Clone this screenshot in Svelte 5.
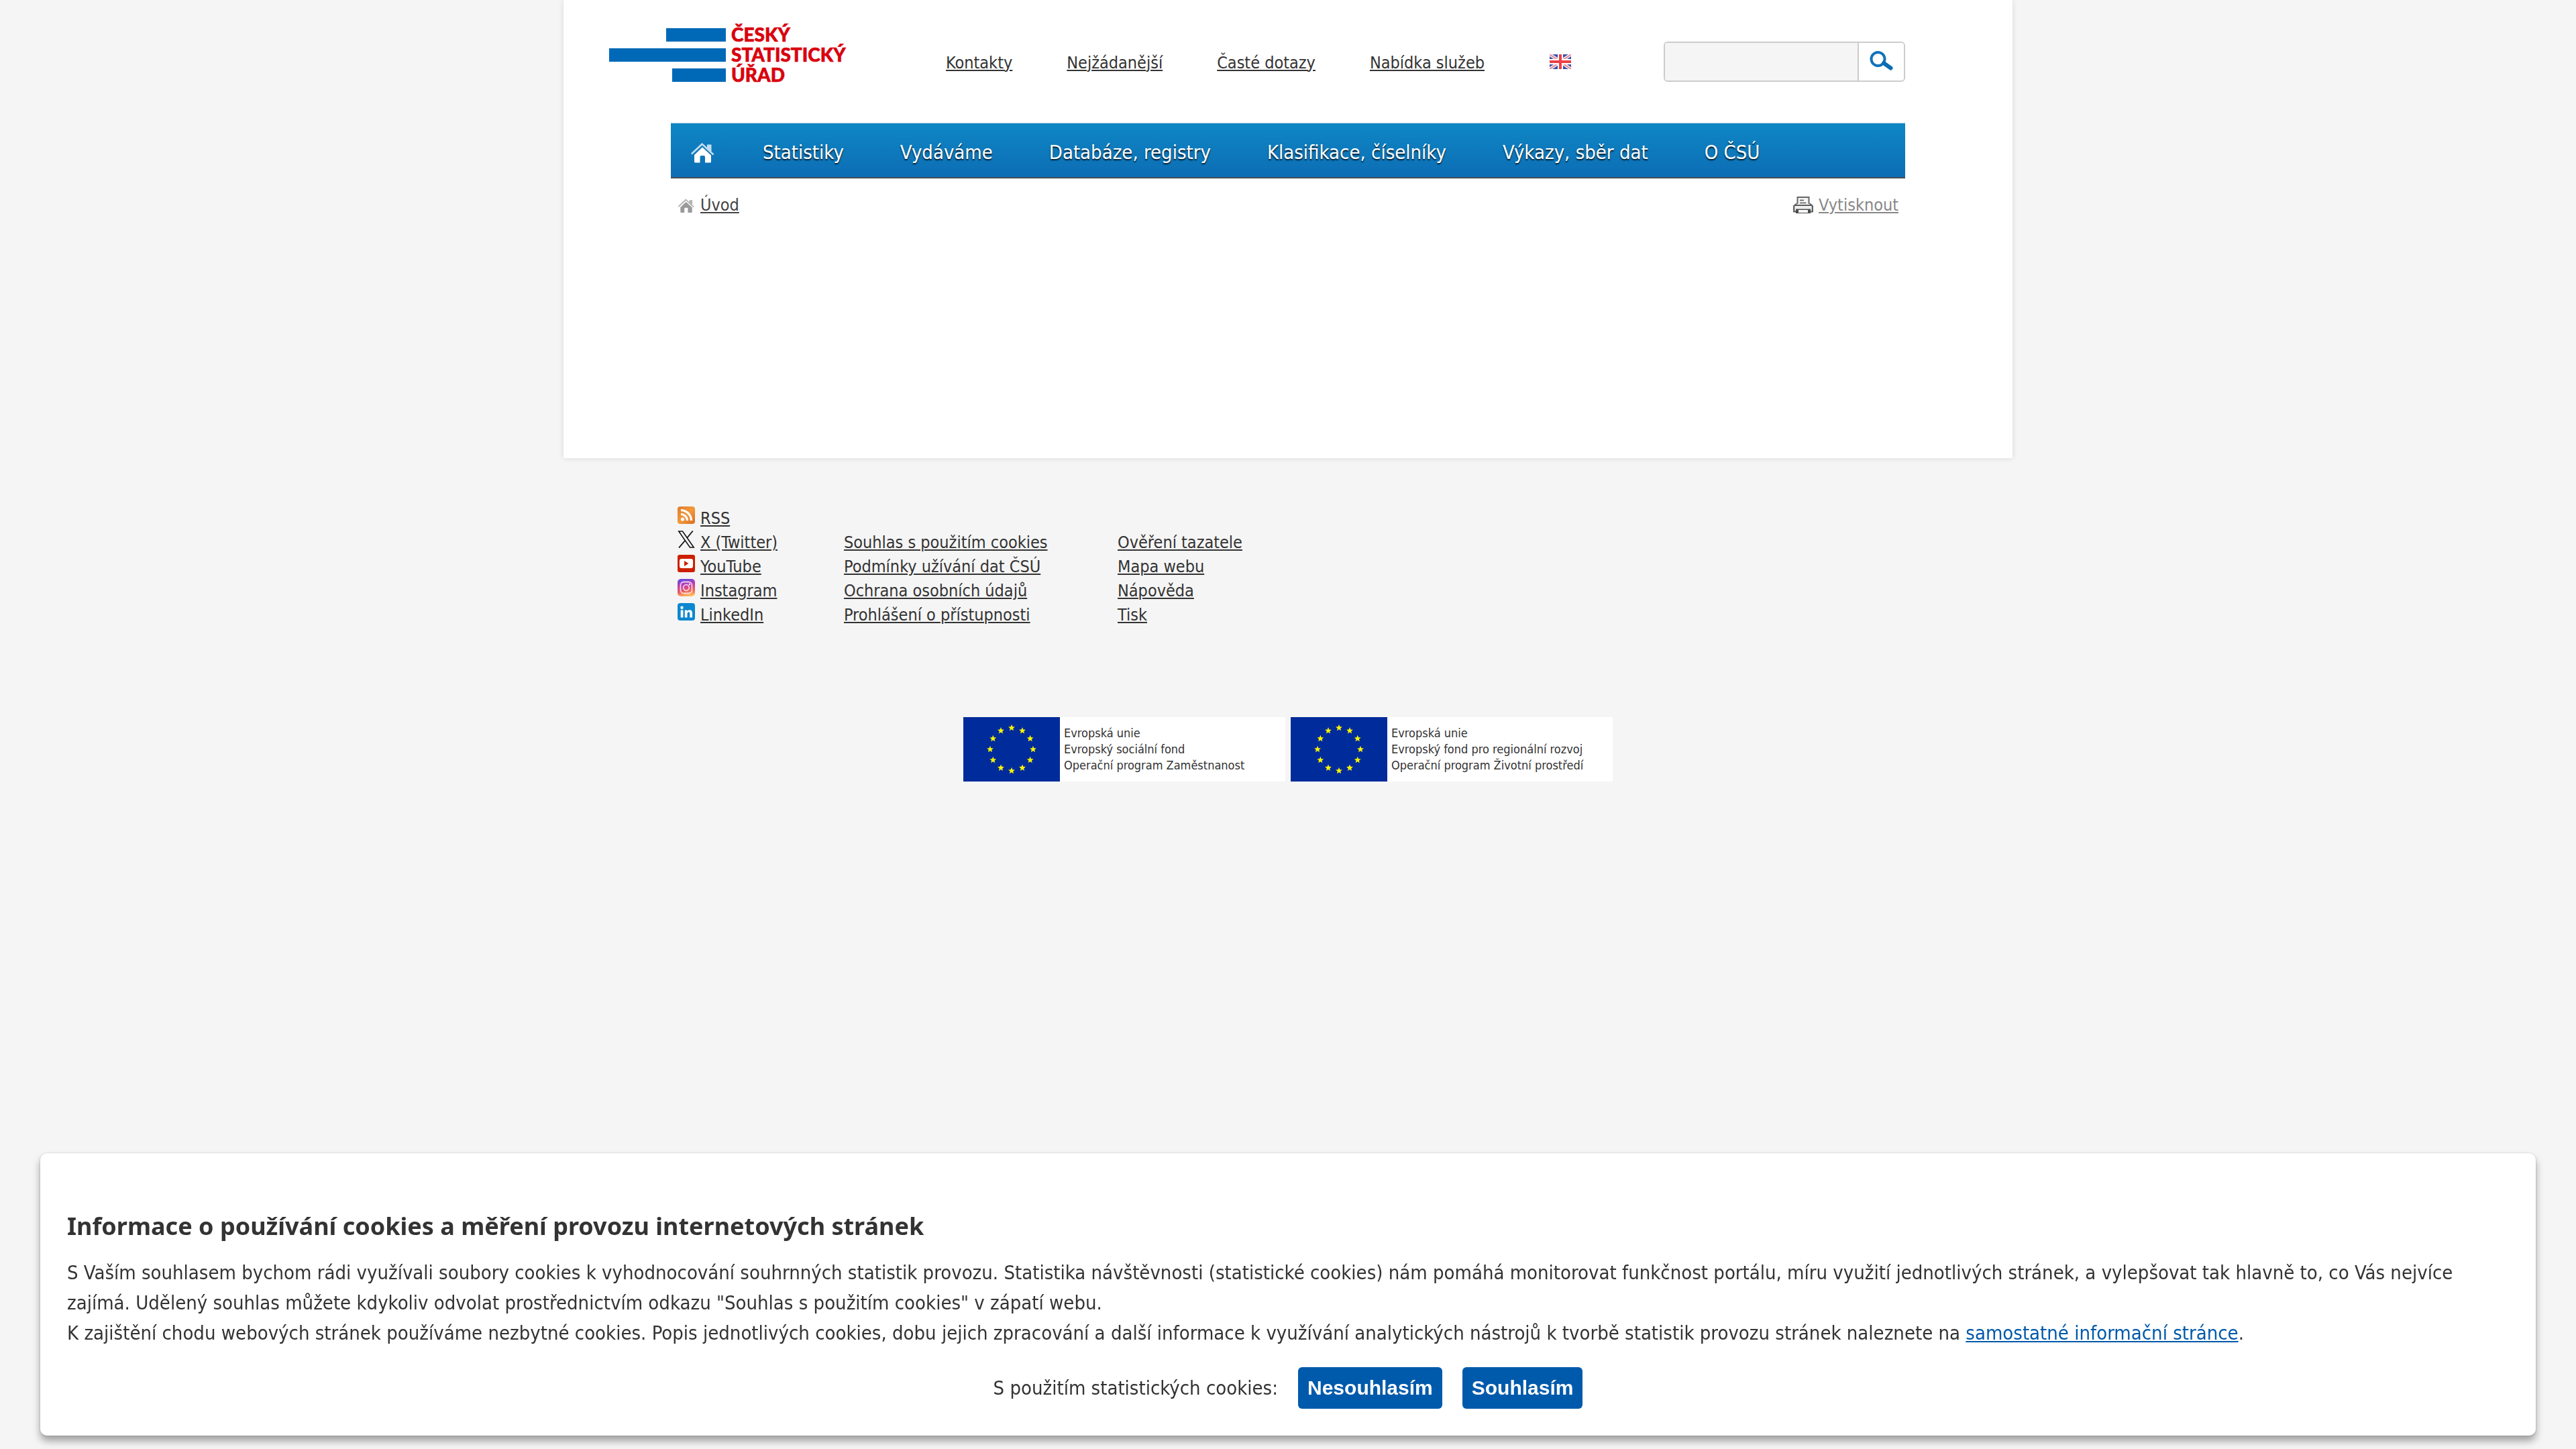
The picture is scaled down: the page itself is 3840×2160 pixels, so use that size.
<script>
  const topLinks = ['Kontakty', 'Nejžádanější', 'Časté dotazy', 'Nabídka služeb'];
  const menu = [
    'Statistiky',
    'Vydáváme',
    'Databáze, registry',
    'Klasifikace, číselníky',
    'Výkazy, sběr dat',
    'O ČSÚ'
  ];
  const social = ['RSS', 'X (Twitter)', 'YouTube', 'Instagram', 'LinkedIn'];
  const legal = [
    'Souhlas s použitím cookies',
    'Podmínky užívání dat ČSÚ',
    'Ochrana osobních údajů',
    'Prohlášení o přístupnosti'
  ];
  const help = ['Ověření tazatele', 'Mapa webu', 'Nápověda', 'Tisk'];
  const funds = [
    ['Evropská unie', 'Evropský sociální fond', 'Operační program Zaměstnanost'],
    ['Evropská unie', 'Evropský fond pro regionální rozvoj', 'Operační program Životní prostředí']
  ];

  const stars = Array.from({ length: 12 }, (_, i) => {
    const cx = 72 + 32 * Math.sin((i * Math.PI) / 6);
    const cy = 48 - 32 * Math.cos((i * Math.PI) / 6);
    return Array.from({ length: 10 }, (_, k) => {
      const r = k % 2 ? 2.3 : 5.2;
      const a = (k * Math.PI) / 5;
      return `${(cx + r * Math.sin(a)).toFixed(2)},${(cy - r * Math.cos(a)).toFixed(2)}`;
    }).join(' ');
  });
</script>

{#snippet house()}
  <path d="M1 17.5 17.5 2 25 8.8V4.5h6.500v10.500l4 3.600-1.800 1.900L17.700 5.600 2.700 19.600z" opacity=".75" />
  <path d="M18 8.500 31 20.500V30q0 1.500-1.500 1.500H22V23q0-2-2-2h-3.500q-2 0-2 2v8.500H7.500Q6 31.500 6 30V20z" />
{/snippet}

<div class="page">
  <header>
    <svg class="logo" viewBox="0 -20 360 124" role="img" aria-label="Český statistický úřad">
      <g fill="#0069b7">
        <rect x="85" y="12" width="89" height="20" />
        <rect x="0" y="42" width="174" height="20" />
        <rect x="94" y="72" width="80" height="20" />
      </g>
      <g class="logo-text">
        <text x="182" y="32">ČESKÝ</text>
        <text x="182" y="62">STATISTICKÝ</text>
        <text x="182" y="92">ÚŘAD</text>
      </g>
    </svg>

    <nav class="top" aria-label="Služby">
      {#each topLinks as l}
        <a href="#top">{l}</a>
      {/each}
      <a class="flag" href="#en" aria-label="English">
        <svg viewBox="0 0 32 22">
          <rect width="32" height="22" fill="#3a4f9f" />
          <path d="M0 0 32 22M32 0 0 22" stroke="#e6e4f0" stroke-width="5" />
          <path d="M0 0 32 22M32 0 0 22" stroke="#ee8088" stroke-width="1.600" />
          <path d="M16 0v22M0 11h32" stroke="#fff" stroke-width="8" />
          <path d="M16 0v22M0 11h32" stroke="#ee3f46" stroke-width="4" />
        </svg>
      </a>
    </nav>

    <form class="search" onsubmit={(e) => e.preventDefault()}>
      <input type="text" aria-label="Hledat" />
      <button type="submit" aria-label="Vyhledat">
        <svg viewBox="0 0 36 30">
          <circle cx="12.500" cy="13" r="10" fill="none" stroke="#1273ba" stroke-width="4" />
          <path d="m21 19 10.500 7.500" stroke="#0b6cb5" stroke-width="6" stroke-linecap="round" />
        </svg>
      </button>
    </form>
  </header>

  <nav class="menu" aria-label="Hlavní nabídka">
    <a class="home" href="#home" aria-label="Úvod">
      <svg viewBox="0 0 37 33" fill="#fff">{@render house()}</svg>
    </a>
    {#each menu as m}
      <a href="#menu">{m}</a>
    {/each}
  </nav>

  <div class="crumbs">
    <a class="crumb" href="#home">
      <svg viewBox="0 0 37 33" fill="#9a9a9a">{@render house()}</svg>
      <span>Úvod</span>
    </a>
    <a class="print" href="#print">
      <svg viewBox="0 0 30 26">
        <path d="M6.500 11V1h17v10" fill="#f4f4f4" stroke="#666" stroke-width="2" />
        <path d="M10 5.500h6M10 9.500h9.500" stroke="#555" stroke-width="1.600" />
        <path d="M1.200 22.500v-8.500l3-2.500V13h21.600v-1.500l3 2.500v8.500z" fill="#efefef" stroke="#5a5a5a" stroke-width="2.200" />
        <path d="M4 18.500h22V25H4z" fill="#4c4c4c" />
        <path d="M8 20h14v4H8z" fill="#fff" />
      </svg>
      <span>Vytisknout</span>
    </a>
  </div>
</div>

<footer>
  <div class="links">
    <ul class="social">
      {#each social as s, i}
        <li>
          <svg viewBox="0 0 26 26" aria-hidden="true">
            {#if i === 0}
              <defs>
                <linearGradient id="rss" x1="0" y1="0" x2="1" y2="1">
                  <stop offset="0" stop-color="#e07a2c" />
                  <stop offset=".5" stop-color="#f2993c" />
                  <stop offset="1" stop-color="#dc6c22" />
                </linearGradient>
              </defs>
              <rect width="26" height="26" rx="4" fill="url(#rss)" />
              <circle cx="7.500" cy="19" r="2.600" fill="#fff" />
              <path d="M5 11.500a9.500 9.500 0 0 1 9.500 9.500M5 5.500A15.500 15.500 0 0 1 20.500 21" fill="none" stroke="#fff" stroke-width="3.200" />
            {:else if i === 1}
              <path d="M1.800 1h5.700l16.700 24h-5.700z" fill="none" stroke="#111" stroke-width="1.600" />
              <path d="M22.800.500 14 11M11.500 14.500 2 25.500" stroke="#111" stroke-width="1.800" />
            {:else if i === 2}
              <rect width="26" height="26" rx="3" fill="#cd1f02" />
              <rect x="3" y="6" width="20" height="14" rx="3" fill="#fff" />
              <path d="m10 9 6.500 4-6.500 4z" fill="#cd1f02" />
            {:else if i === 3}
              <defs>
                <linearGradient id="ig" x1=".4" y1="0" x2=".6" y2="1">
                  <stop offset="0" stop-color="#6a4be0" />
                  <stop offset=".35" stop-color="#c03bb0" />
                  <stop offset=".7" stop-color="#f0605c" />
                  <stop offset="1" stop-color="#fdc45c" />
                </linearGradient>
              </defs>
              <rect width="26" height="26" rx="5" fill="url(#ig)" />
              <g fill="none" stroke="#fff" stroke-opacity=".75" stroke-width="1.800">
                <rect x="4.500" y="4.500" width="17" height="17" rx="5" />
                <circle cx="13" cy="13" r="4.300" />
              </g>
              <circle cx="18" cy="8" r="1.200" fill="#fff" />
            {:else}
              <rect width="26" height="26" rx="4" fill="#0d87cf" />
              <g fill="#fff">
                <circle cx="6.500" cy="6.800" r="2.200" />
                <rect x="4.700" y="10.500" width="3.700" height="11" />
                <path d="M10.800 10.500h3.500v1.600q1.200-1.900 3.600-1.900 4.100 0 4.100 4.800v6.500h-3.700v-5.900q0-2.300-1.800-2.300-2 0-2 2.500v5.700h-3.700z" />
              </g>
            {/if}
          </svg>
          <a href="#social">{s}</a>
        </li>
      {/each}
    </ul>
    <ul class="lower">
      {#each legal as l}
        <li><a href="#legal">{l}</a></li>
      {/each}
    </ul>
    <ul class="lower">
      {#each help as l}
        <li><a href="#help">{l}</a></li>
      {/each}
    </ul>
  </div>

  <div class="funds">
    {#each funds as f}
      <div class="fund">
        <svg viewBox="0 0 144 96" aria-hidden="true">
          <rect width="144" height="96" fill="#002b9b" />
          {#each stars as p}
            <polygon points={p} fill="#f8f400" />
          {/each}
        </svg>
        <p>
          {#each f as line}
            <span>{line}</span>
          {/each}
        </p>
      </div>
    {/each}
  </div>
</footer>

<section class="cookies" aria-label="Cookies">
  <h2>Informace o používání cookies a měření provozu internetových stránek</h2>
  <p>
    S Vaším souhlasem bychom rádi využívali soubory cookies k vyhodnocování souhrnných statistik provozu. Statistika návštěvnosti (statistické cookies) nám pomáhá monitorovat funkčnost portálu, míru využití jednotlivých stránek, a vylepšovat tak hlavně to, co Vás nejvíce zajímá. Udělený souhlas můžete kdykoliv odvolat prostřednictvím odkazu "Souhlas s použitím cookies" v zápatí webu.<br />
    K zajištění chodu webových stránek používáme nezbytné cookies. Popis jednotlivých cookies, dobu jejich zpracování a další informace k využívání analytických nástrojů k tvorbě statistik provozu stránek naleznete na <a href="#info">samostatné informační stránce</a>.
  </p>
  <div class="choice">
    <span>S použitím statistických cookies:</span>
    <button type="button">Nesouhlasím</button>
    <button type="button">Souhlasím</button>
  </div>
</section>

<style>
  :global(body) {
    background: #f5f5f5;
    color: #333;
    font: 25px/36px 'DejaVu Sans Condensed', 'DejaVu Sans', sans-serif;
  }

  * {
    box-sizing: border-box;
  }

  svg {
    display: block;
    flex: none;
  }

  a {
    color: inherit;
    text-decoration: underline 2px;
    text-underline-offset: 2px;
  }

  ul,
  p,
  h2 {
    margin: 0;
    padding: 0;
    list-style: none;
  }

  .page {
    max-width: 2160px;
    min-height: 683px;
    margin: 0 auto;
    background: #fff;
    box-shadow: 0 0 8px rgba(0, 0, 0, 0.12);
  }

  header {
    display: flex;
    align-items: center;
    min-height: 183px;
    padding: 0 160px 0 68px;
  }

  .logo {
    width: 360px;
    height: 124px;
    margin-bottom: 40px;
  }

  .logo-text {
    fill: #d9000d;
    stroke: #d9000d;
    stroke-width: 0.6px;
    font: 900 28px 'Lato', sans-serif;
  }

  .top {
    display: flex;
    align-items: center;
    gap: 81px;
    margin-left: 142px;
    padding-top: 4px;
  }

  .flag {
    padding: 0 0 4px 16px;
  }

  .flag svg {
    width: 32px;
    height: 22px;
  }

  .search {
    display: flex;
    width: 360px;
    height: 60px;
    margin-left: auto;
    border: 2px solid #ccc;
    border-radius: 6px;
    overflow: hidden;
  }

  .search input {
    flex: 1;
    min-width: 0;
    padding: 0 12px;
    border: 0;
    border-right: 2px solid #ccc;
    background: #f5f5f5;
    font: inherit;
  }

  .search button {
    display: grid;
    width: 67px;
    padding: 0 0 4px;
    border: 0;
    background: #fff;
    place-items: center;
  }

  .search svg {
    width: 36px;
    height: 30px;
  }

  .menu {
    display: flex;
    gap: 84px;
    margin: 0 160px;
    padding: 12px 29px 4px;
    border-bottom: 2px solid #484c52;
    background: linear-gradient(#0e87c5, #0d6db4);
    box-shadow: inset 0 1px #a8cfe2;
    color: #fff;
    font-size: 29px;
    line-height: 65px;
    text-shadow: 0 2px 2px rgba(0, 0, 0, 0.8);
  }

  .menu a {
    text-decoration: none;
  }

  .home {
    display: flex;
    align-items: center;
    margin-right: -13px;
  }

  .home svg {
    width: 37px;
    height: 33px;
  }

  .crumbs {
    display: flex;
    justify-content: space-between;
    margin: 0 160px;
    padding: 22px 10px 0;
  }

  .crumb,
  .print {
    display: flex;
    align-items: center;
    gap: 8px;
    color: #444;
    text-decoration: none;
  }

  .crumb span,
  .print span {
    text-decoration: underline 2px;
    text-underline-offset: 2px;
  }

  .crumb svg {
    width: 26px;
    height: 23px;
  }

  .print {
    color: #888;
  }

  .print svg {
    width: 30px;
    height: 26px;
  }

  footer {
    max-width: 1840px;
    margin: 0 auto;
    padding: 72px 10px 0;
  }

  .links {
    display: grid;
    grid-template-columns: 248px 408px auto;
  }

  .social li {
    display: flex;
    gap: 8px;
  }

  .social svg {
    width: 26px;
    height: 26px;
  }

  .lower {
    padding-top: 36px;
  }

  .funds {
    display: flex;
    justify-content: center;
    gap: 8px;
    margin-top: 134px;
  }

  .fund {
    display: flex;
    width: 480px;
    background: #fff;
    font-size: 18px;
    line-height: 24px;
  }

  .fund svg {
    width: 144px;
    height: 96px;
  }

  .fund p {
    padding: 12px 0 0 6px;
  }

  .fund span {
    display: block;
  }

  .cookies {
    position: fixed;
    right: 60px;
    bottom: 20px;
    left: 60px;
    padding: 82px 40px 40px;
    border-radius: 10px;
    background: #fff;
    box-shadow: 0 0 2px 1px rgba(0, 0, 0, 0.08), 0 8px 12px rgba(0, 0, 0, 0.35);
    font-size: 29px;
    line-height: 45px;
  }

  .cookies h2 {
    margin-bottom: 20px;
    font: bold 36px/54px 'Noto Sans', sans-serif;
  }

  .cookies a {
    color: #0059a9;
  }

  .choice {
    display: flex;
    align-items: center;
    justify-content: center;
    gap: 30px;
    margin-top: 28px;
  }

  .choice button {
    height: 62px;
    padding: 0 14px;
    border: 0;
    border-radius: 6px;
    background: #005aab;
    color: #fff;
    font: bold 30px 'Liberation Sans', sans-serif;
  }
</style>
